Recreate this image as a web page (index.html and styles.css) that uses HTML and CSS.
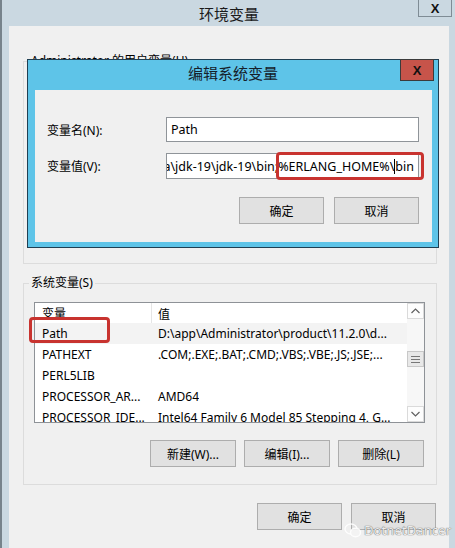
FILE: index.html
```html
<!DOCTYPE html>
<html lang="zh-CN">
<head>
<meta charset="utf-8">
<title>环境变量</title>
<link rel="stylesheet" href="styles.css">
</head>
<body>
<div class="window">
  <div class="titlebar">
    <span class="wtitle">环境变量</span>
    <span class="wclose">X</span>
  </div>
  <div class="client">
    <fieldset class="group user-group">
      <legend>Administrator 的用户变量(U)</legend>
      <div class="user-body"></div>
    </fieldset>
    <fieldset class="group sys-group">
      <legend>系统变量(S)</legend>
      <div class="list-wrap">
        <div class="list">
          <div class="list-main">
            <div class="lhead"><span class="c1 hc1">变量</span><span class="c2">值</span></div>
            <div class="row sel"><span class="c1">Path</span><span class="c2">D:\app\Administrator\product\11.2.0\d...</span></div>
            <div class="row"><span class="c1">PATHEXT</span><span class="c2">.COM;.EXE;.BAT;.CMD;.VBS;.VBE;.JS;.JSE;...</span></div>
            <div class="row"><span class="c1">PERL5LIB</span><span class="c2"></span></div>
            <div class="row"><span class="c1">PROCESSOR_AR...</span><span class="c2">AMD64</span></div>
            <div class="row"><span class="c1">PROCESSOR_IDE...</span><span class="c2">Intel64 Family 6 Model 85 Stepping 4, G...</span></div>
          </div>
          <div class="vscroll">
            <div class="sbtn"><svg width="15" height="14" viewBox="0 0 15 14"><polyline points="3.5,9 7.5,5 11.5,9" fill="none" stroke="#606060" stroke-width="1.2"/></svg></div>
            <div class="strack-top"></div>
            <div class="thumb"><svg width="9" height="7" viewBox="0 0 9 7"><path d="M0 0.5H9M0 3.5H9M0 6.5H9" stroke="#777" stroke-width="1"/></svg></div>
            <div class="strack"></div>
            <div class="sbtn"><svg width="15" height="14" viewBox="0 0 15 14"><polyline points="3.5,5 7.5,9 11.5,5" fill="none" stroke="#606060" stroke-width="1.2"/></svg></div>
          </div>
        </div>
        <div class="mark mark-path"></div>
      </div>
      <div class="btn-row">
        <button class="btn">新建(W)...</button>
        <button class="btn">编辑(I)...</button>
        <button class="btn">删除(L)</button>
      </div>
    </fieldset>
    <div class="footer">
      <button class="btn btn-sm">确定</button>
      <button class="btn btn-sm">取消</button>
    </div>
  </div>

  <div class="dialog">
    <div class="dtitle">编辑系统变量</div>
    <span class="dclose">X</span>
    <div class="dbody">
      <div class="form">
        <label class="flabel">变量名(N):</label>
        <div class="input"><span class="itext">Path</span></div>
        <label class="flabel">变量值(V):</label>
        <div class="valwrap">
          <div class="input input-val"><span class="itext">C:\Program Files\Java\jdk-19\jdk-19\bin;%ERLANG_HOME%\<span class="caret"></span>bin</span></div>
          <div class="mark mark-val"></div>
        </div>
      </div>
      <div class="dbtns">
        <button class="btn btn-sm">确定</button>
        <button class="btn btn-sm">取消</button>
      </div>
    </div>
  </div>

  <div class="watermark">
    <svg class="wm-icon" width="18" height="15" viewBox="0 0 18 15">
      <ellipse cx="7" cy="6" rx="6" ry="5" fill="none" stroke="#fff" stroke-width="1.4"/>
      <ellipse cx="11.5" cy="9.5" rx="5" ry="4.2" fill="#f4f4f4" stroke="#fff" stroke-width="1.4"/>
    </svg>
    <span class="wm-text">DotnetDancer</span>
  </div>
</div>
</body>
</html>
```

FILE: styles.css
```css
html, body {
  margin: 0;
  padding: 0;
}

body {
  width: 455px;
  height: 548px;
  overflow: hidden;
  background: #cad8e1;
  font-family: "Noto Sans", "Noto Sans CJK SC", sans-serif;
  font-size: 12px;
  color: #000;
}

.window {
  position: relative;
  height: 548px;
  box-sizing: border-box;
  border-left: 2px solid #77838b;
  padding: 0 6px 0 7px;
  display: flex;
  flex-direction: column;
}

.titlebar {
  position: relative;
  height: 26px;
  flex: none;
  display: flex;
  align-items: center;
  justify-content: center;
}

.wtitle {
  font-family: "Noto Sans CJK SC", sans-serif;
  font-size: 15px;
  color: #1a1a1a;
}

.wclose {
  position: absolute;
  right: -3px;
  top: 0;
  width: 34px;
  height: 17px;
  box-sizing: border-box;
  border: 1px solid #7f8c95;
  border-top: none;
  display: flex;
  align-items: center;
  justify-content: center;
  font-family: "Liberation Sans", sans-serif;
  font-weight: bold;
  font-size: 13px;
  color: #111;
}

.client {
  flex: 1;
  background: #f0f0f0;
  padding: 27px 12px 0 14px;
}

.group {
  margin: 0;
  border: 1px solid #dcdcdc;
  padding: 0 11px 17px 10px;
  min-width: 0;
}

.group legend {
  padding: 0 2px;
  margin-left: -5px;
  line-height: 16px;
  font-size: 12px;
  color: #000;
}

.user-group {
  padding-bottom: 0;
}

.user-body {
  height: 194px;
}

.sys-group {
  margin-top: 11px;
  padding-top: 11px;
}

.list-wrap {
  position: relative;
}

.list {
  height: 121px;
  box-sizing: border-box;
  border: 1px solid #8e9297;
  background: #fff;
  display: flex;
  overflow: hidden;
}

.list-main {
  flex: 1;
  overflow: hidden;
}

.lhead {
  height: 20px;
  display: flex;
  align-items: center;
}

.row {
  height: 21px;
  display: flex;
  align-items: center;
  white-space: nowrap;
}

.row.sel {
  background: #f3f3f3;
}

.c1 {
  width: 117px;
  flex: none;
  box-sizing: border-box;
  padding-left: 7px;
  overflow: hidden;
}

.hc1 {
  height: 20px;
  line-height: 20px;
  border-right: 1px solid #e5e5e5;
  font-family: "Noto Sans CJK SC", sans-serif;
}

.c2 {
  padding-left: 6px;
  white-space: nowrap;
  overflow: hidden;
}

.lhead .c2 {
  font-family: "Noto Sans CJK SC", sans-serif;
}

.vscroll {
  width: 17px;
  flex: none;
  background: #f7f7f7;
  display: flex;
  flex-direction: column;
}

.sbtn {
  height: 16px;
  flex: none;
  box-sizing: border-box;
  border: 1px solid #dadada;
  display: flex;
  align-items: center;
  justify-content: center;
  background: #fdfdfd;
}

.strack-top {
  height: 32px;
  flex: none;
}

.strack {
  flex: 1;
}

.thumb {
  height: 16px;
  flex: none;
  box-sizing: border-box;
  border: 1px solid #c8c8c8;
  background: #e8e8e8;
  display: flex;
  align-items: center;
  justify-content: center;
}

.mark {
  position: absolute;
  box-sizing: border-box;
  border: 3px solid #c8332f;
  border-radius: 4px;
}

.mark-path {
  left: -5px;
  top: 15px;
  width: 81px;
  height: 26px;
}

.btn-row {
  margin-top: 17px;
  display: flex;
  justify-content: flex-end;
  gap: 8px;
  padding-right: 1px;
}

.btn {
  width: 86px;
  height: 27px;
  box-sizing: border-box;
  border: 1px solid #adadad;
  background: #e1e1e1;
  font-family: "Noto Sans", "Noto Sans CJK SC", sans-serif;
  font-size: 12px;
  color: #000;
  padding: 0;
  margin: 0;
}

.btn-sm {
  width: 85px;
}

.footer {
  margin-top: 18px;
  display: flex;
  justify-content: flex-end;
  gap: 9px;
  padding-right: 1px;
}

/* dialog */
.dialog {
  position: absolute;
  left: 25px;
  top: 59px;
  width: 412px;
  height: 189px;
  box-sizing: border-box;
  border: 1px solid #1f3f52;
  background: #5ec4e8;
  display: flex;
  flex-direction: column;
}

.dtitle {
  height: 30px;
  flex: none;
  box-sizing: border-box;
  padding-bottom: 6px;
  display: flex;
  align-items: center;
  justify-content: center;
  font-family: "Noto Sans CJK SC", sans-serif;
  font-size: 15px;
  color: #15202a;
}

.dclose {
  position: absolute;
  right: 4px;
  top: -1px;
  width: 34px;
  height: 22px;
  box-sizing: border-box;
  border: 1px solid #3b3b3b;
  background: #c7544a;
  display: flex;
  align-items: center;
  justify-content: center;
  font-family: "Liberation Sans", sans-serif;
  font-weight: bold;
  font-size: 13px;
  color: #111;
}

.dbody {
  flex: 1;
  margin: 0 6px 5px 7px;
  background: #f0f0f0;
  padding: 27px 13px 0 12px;
}

.form {
  display: grid;
  grid-template-columns: 119px 253px;
  row-gap: 11px;
  align-items: center;
}

.flabel {
  font-size: 12px;
  white-space: nowrap;
}

.input {
  height: 25px;
  box-sizing: border-box;
  border: 1px solid #8f9499;
  background: #fff;
  display: flex;
  align-items: center;
  padding: 0 4px;
  overflow: hidden;
  white-space: nowrap;
}

.valwrap {
  position: relative;
}

.input-val {
  height: 26px;
  justify-content: flex-end;
}

.itext {
  font-size: 12.5px;
  flex: none;
  display: flex;
  align-items: center;
}

.caret {
  display: inline-block;
  width: 1px;
  height: 15px;
  background: #000;
}

.mark-val {
  left: 110px;
  top: -1px;
  width: 148px;
  height: 28px;
}

.dbtns {
  margin-top: 18px;
  display: flex;
  justify-content: flex-end;
  gap: 10px;
}

/* watermark */
.watermark {
  position: absolute;
  left: 342px;
  top: 521px;
  display: flex;
  align-items: center;
  gap: 2px;
}

.wm-icon {
  opacity: 0.9;
}

.wm-text {
  font-family: "Noto Sans", sans-serif;
  font-size: 13px;
  color: #ececec;
  text-shadow: 0 0 1px #6f6f6f, 0 0 1px #6f6f6f;
  letter-spacing: 0.1px;
}
```
